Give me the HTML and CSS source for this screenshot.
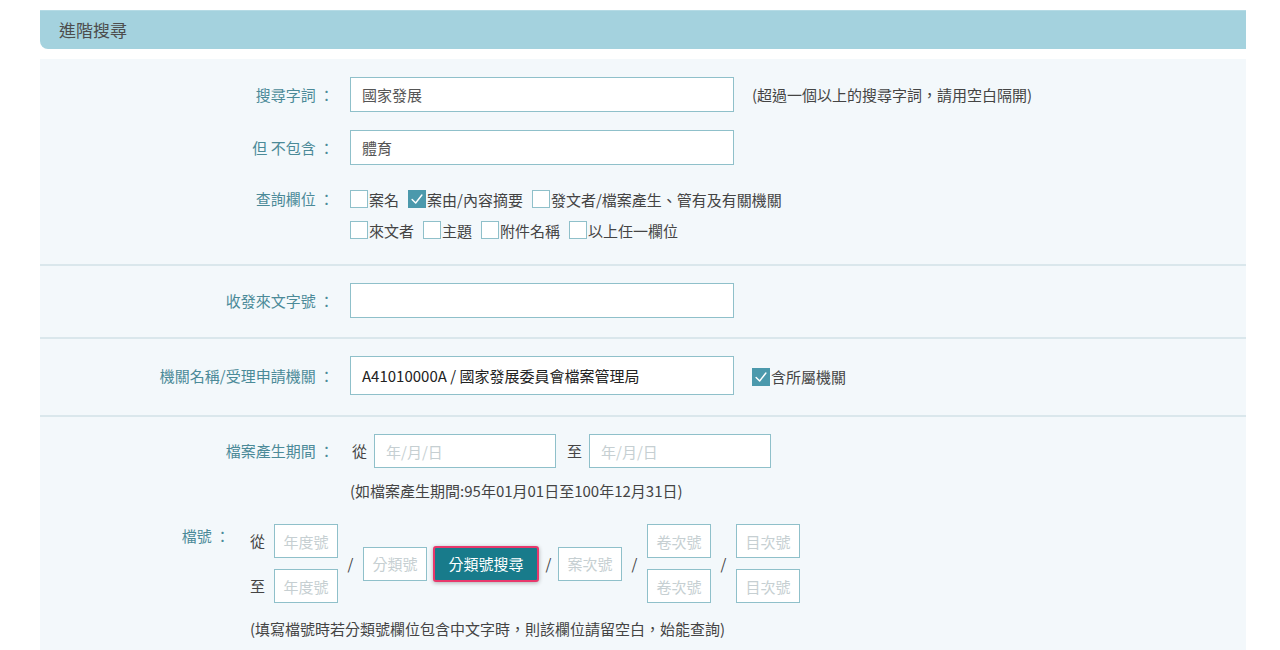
FILE: index.html
```html
<!DOCTYPE html>
<html lang="zh-Hant">
<head>
<meta charset="utf-8">
<title>進階搜尋</title>
<link rel="stylesheet" href="styles.css">
</head>
<body>
<div class="page">
  <div class="header">進階搜尋</div>
  <div class="panel">
    <section class="sec sec-first">
      <div class="row">
        <div class="label">搜尋字詞 ：</div>
        <div class="field"><div class="input wide">國家發展</div></div>
        <div class="note">(超過一個以上的搜尋字詞，請用空白隔開)</div>
      </div>
      <div class="row">
        <div class="label">但 不包含 ：</div>
        <div class="field"><div class="input wide">體育</div></div>
      </div>
      <div class="row row-top row-cb">
        <div class="label cb-label">查詢欄位 ：</div>
        <div class="cb-lines">
          <div class="cb-line">
            <span class="cb"><span class="box"></span>案名</span>
            <span class="cb"><span class="box checked"><svg viewBox="0 0 18 18"><path d="M3.5 9.5 L7.5 13.5 L14.5 4.5" /></svg></span>案由/內容摘要</span>
            <span class="cb"><span class="box"></span>發文者/檔案產生、管有及有關機關</span>
          </div>
          <div class="cb-line">
            <span class="cb"><span class="box"></span>來文者</span>
            <span class="cb"><span class="box"></span>主題</span>
            <span class="cb"><span class="box"></span>附件名稱</span>
            <span class="cb"><span class="box"></span>以上任一欄位</span>
          </div>
        </div>
      </div>
    </section>
    <section class="sec sec-2">
      <div class="row">
        <div class="label">收發來文字號 ：</div>
        <div class="field"><div class="input wide"></div></div>
      </div>
    </section>
    <section class="sec sec-3">
      <div class="row">
        <div class="label">機關名稱/受理申請機關 ：</div>
        <div class="field"><div class="input wide tall">A41010000A / 國家發展委員會檔案管理局</div></div>
        <div class="note note-cb"><span class="box checked"><svg viewBox="0 0 18 18"><path d="M3.5 9.5 L7.5 13.5 L14.5 4.5" /></svg></span>含所屬機關</div>
      </div>
    </section>
    <section class="sec sec-4">
      <div class="row">
        <div class="label">檔案產生期間 ：</div>
        <div class="date-group">
          <span class="word">從</span>
          <div class="input date ph">年/月/日</div>
          <span class="word word-to">至</span>
          <div class="input date ph">年/月/日</div>
        </div>
      </div>
      <div class="hint hint-date">(如檔案產生期間:95年01月01日至100年12月31日)</div>
      <div class="file-row">
        <div class="label label-file">檔號 ：</div>
        <div class="stack">
          <div class="stack-line"><span class="word">從</span><div class="input small ph">年度號</div></div>
          <div class="stack-line"><span class="word">至</span><div class="input small ph">年度號</div></div>
        </div>
        <span class="slash">/</span>
        <div class="input small ph">分類號</div>
        <button class="btn" type="button">分類號搜尋</button>
        <span class="slash slash-narrow">/</span>
        <div class="input small ph">案次號</div>
        <span class="slash">/</span>
        <div class="stack">
          <div class="input small ph">卷次號</div>
          <div class="input small ph">卷次號</div>
        </div>
        <span class="slash">/</span>
        <div class="stack">
          <div class="input small ph">目次號</div>
          <div class="input small ph">目次號</div>
        </div>
      </div>
      <div class="hint hint-file">(填寫檔號時若分類號欄位包含中文字時，則該欄位請留空白，始能查詢)</div>
    </section>
  </div>
</div>
</body>
</html>
```

FILE: styles.css
```css
html, body {
  margin: 0;
  padding: 0;
  background: #ffffff;
  font-family: "Noto Sans CJK TC", "Noto Sans", "Liberation Sans", sans-serif;
  font-size: 15px;
  color: #444444;
}

.page {
  width: 1206px;
  margin-left: 40px;
  padding-top: 10px;
}

.header {
  height: 39px;
  box-sizing: border-box;
  background: #a4d2de;
  border-top: 1px solid #b5dbe5;
  border-radius: 0 0 0 8px;
  padding-left: 19px;
  font-size: 17px;
  line-height: 38px;
  color: #4d4d4d;
}

.panel {
  margin-top: 10px;
  background: #f3f8fb;
  height: 600px;
}

.sec {
  padding: 17px 0 19px;
}

.sec + .sec {
  border-top: 2px solid #dae7ec;
}

.sec-first {
  padding-top: 18px;
  padding-bottom: 24px;
}

.sec-3 {
  padding-bottom: 20px;
}

.row {
  display: flex;
  align-items: center;
}

.sec-first .row + .row {
  margin-top: 18px;
}

.sec-first .row-cb {
  margin-top: 24px;
  align-items: flex-start;
}

.label {
  width: 294px;
  flex: none;
  text-align: right;
  color: #4b8a98;
  margin-right: 16px;
  white-space: nowrap;
  line-height: 20px;
}

.input {
  box-sizing: border-box;
  background: #ffffff;
  border: 1px solid #8fc0ca;
  color: #555555;
  display: flex;
  align-items: center;
  padding-left: 11px;
  white-space: nowrap;
}

.input.wide {
  width: 384px;
  height: 35px;
}

.input.tall {
  height: 39px;
  font-size: 15px;
  color: #222222;
}

.ph {
  color: #c6cfd2;
}

.note {
  margin-left: 18px;
  color: #444444;
}

.note-cb {
  display: flex;
  align-items: center;
  margin-top: 2px;
}

.cb-lines {
  display: flex;
  flex-direction: column;
  gap: 11px;
  padding-top: 6px;
}

.row-cb .cb-label {
  padding-top: 6px;
}

.cb-line {
  display: flex;
  align-items: center;
  gap: 9px;
  height: 20px;
}

.cb {
  display: flex;
  align-items: center;
  color: #444444;
}

.box {
  width: 18px;
  height: 18px;
  box-sizing: border-box;
  border: 1px solid #8fc0ca;
  background: #ffffff;
  margin-right: 1px;
  flex: none;
  display: inline-flex;
}

.box.checked {
  background: #4b99ac;
  border-color: #4b99ac;
}

.box svg {
  width: 16px;
  height: 16px;
}

.box svg path {
  fill: none;
  stroke: #ffffff;
  stroke-width: 1.6;
  stroke-linecap: round;
  stroke-linejoin: round;
}

.date-group {
  display: flex;
  align-items: center;
}

.word {
  width: 15px;
  color: #444444;
  line-height: 20px;
  flex: none;
}

.date-group .word {
  margin-left: 2px;
  margin-right: 7px;
}

.date-group .word-to {
  margin-left: 11px;
  margin-right: 7px;
}

.input.date {
  width: 182px;
  height: 34px;
}

.hint {
  line-height: 20px;
  color: #444444;
  white-space: nowrap;
}

.hint-date {
  margin-left: 310px;
  margin-top: 13px;
}

.file-row {
  display: flex;
  align-items: center;
  margin-top: 23px;
}

.label-file {
  width: 190px;
  margin-right: 20px;
  align-self: flex-start;
  margin-top: 2px;
}

.stack {
  display: flex;
  flex-direction: column;
  gap: 11px;
}

.stack-line {
  display: flex;
  align-items: center;
}

.stack-line .word {
  margin-right: 9px;
}

.input.small {
  width: 64px;
  height: 34px;
  padding-left: 0;
  justify-content: center;
}

.slash {
  width: 25px;
  text-align: center;
  color: #444444;
  flex: none;
}

.slash-narrow {
  width: 19px;
}

.btn {
  margin-left: 6px;
  width: 106px;
  height: 36px;
  box-sizing: border-box;
  background: #187b8b;
  color: #ffffff;
  font-family: inherit;
  font-size: 15px;
  border: 2px solid #e8386c;
  border-radius: 3px;
  box-shadow: 0 1px 4px rgba(0, 0, 0, 0.3);
  padding: 0;
}

.hint-file {
  margin-left: 210px;
  margin-top: 16px;
}
```
